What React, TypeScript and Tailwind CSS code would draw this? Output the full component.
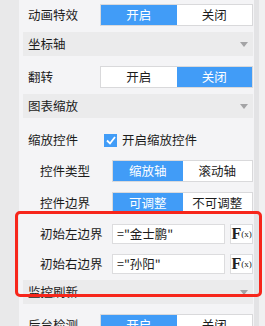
import type { ReactNode } from 'react';

const font = { fontFamily: '"Noto Sans CJK SC", "Noto Sans", sans-serif' };

function Toggle({ left, right, active }: { left: string; right: string; active: 'left' | 'right' }) {
  return (
    <div className="grid flex-1 grid-cols-2 h-[22px] border border-[#d9d9db] bg-white text-[12.5px] leading-none">
      <div
        className={`flex items-center justify-center ${active === 'left' ? 'bg-[#419cf7] text-white' : 'text-[#1c1c1c]'}`}
      >
        {left}
      </div>
      <div
        className={`flex items-center justify-center ${active === 'right' ? 'bg-[#419cf7] text-white' : 'text-[#1c1c1c]'}`}
      >
        {right}
      </div>
    </div>
  );
}

function Header({ title, className = '' }: { title: string; className?: string }) {
  return (
    <div className={`ml-[4px] flex h-[24px] shrink-0 items-center justify-between bg-[#ebebec] pl-[5px] pr-[5px] ${className}`}>
      <span className="text-[12.5px] text-[#1c1c1c]">{title}</span>
      <svg width="8" height="5" viewBox="0 0 8 5">
        <path d="M0 0 H8 L4 5 Z" fill="#a3a3a5" />
      </svg>
    </div>
  );
}

function Row({ label, sub, children, className = '' }: { label: string; sub?: boolean; children: ReactNode; className?: string }) {
  return (
    <div className={`flex shrink-0 items-center ${className}`}>
      <div className={`${sub ? 'w-[93px] pl-[21px]' : 'w-[81px] pl-[9px]'} shrink-0 text-[12.5px] text-[#1c1c1c]`}>{label}</div>
      {children}
    </div>
  );
}

function FxButton() {
  return (
    <div className="ml-[5px] flex h-[20px] w-[23px] items-center justify-center border border-[#dcdcde] bg-white text-[#222]">
      <span className="text-[16px] font-bold leading-none" style={{ fontFamily: '"Liberation Serif", serif' }}>
        F
      </span>
      <span className="text-[9px] leading-none" style={{ fontFamily: '"Liberation Serif", serif' }}>
        (x)
      </span>
    </div>
  );
}

function Field({ value }: { value: string }) {
  return (
    <div className="flex h-[20px] w-[114px] items-center border border-[#dcdcde] bg-white px-[4px] text-[12.5px] text-[#1c1c1c]">
      {value}
    </div>
  );
}

export default function App() {
  return (
    <div className="relative flex h-[326px] w-[265px] overflow-hidden bg-[#e9e9ea]" style={font}>
      <div className="w-[19px] shrink-0" />
      <div className="flex w-[235px] shrink-0 flex-col bg-[#f4f4f6] pt-[4px] pr-[1px]">
        <Row label="动画特效" className="h-[22px]">
          <Toggle left="开启" right="关闭" active="left" />
        </Row>
        <Header title="坐标轴" className="mt-[6px]" />
        <Row label="翻转" className="mt-[10px] h-[22px]">
          <Toggle left="开启" right="关闭" active="right" />
        </Row>
        <Header title="图表缩放" className="mt-[6px]" />
        <Row label="缩放控件" className="mt-[11px] h-[22px]">
          <div className="ml-[4px] flex items-center gap-[5px]">
            <div className="flex h-[13px] w-[13px] items-center justify-center bg-[#419cf7]">
              <svg width="10" height="9" viewBox="0 0 10 9">
                <path d="M1 4.5 L4 7.5 L9 1" stroke="white" strokeWidth="1.8" fill="none" />
              </svg>
            </div>
            <span className="text-[12.5px] text-[#1c1c1c]">开启缩放控件</span>
          </div>
        </Row>
        <Row label="控件类型" sub className="mt-[9px] h-[22px]">
          <Toggle left="缩放轴" right="滚动轴" active="left" />
        </Row>
        <Row label="控件边界" sub className="mt-[10px] h-[22px]">
          <Toggle left="可调整" right="不可调整" active="left" />
        </Row>
        <Row label="初始左边界" sub className="mt-[10px] h-[20px]">
          <Field value={'="金士鹏"'} />
          <FxButton />
        </Row>
        <Row label="初始右边界" sub className="mt-[10px] h-[20px]">
          <Field value={'="孙阳"'} />
          <FxButton />
        </Row>
        <Header title="监控刷新" className="mt-[6px]" />
        <Row label="后台检测" className="mt-[10px] h-[22px]">
          <Toggle left="开启" right="关闭" active="left" />
        </Row>
      </div>
      <div className="w-[5px] shrink-0 bg-[#e3e3e5]" />
      <div className="flex-1 bg-[#f0f0f1]" />
      <div className="absolute left-[15px] top-[211px] h-[86px] w-[247px] rounded-[5px] border-[3px] border-[#f7261b]" />
    </div>
  );
}
